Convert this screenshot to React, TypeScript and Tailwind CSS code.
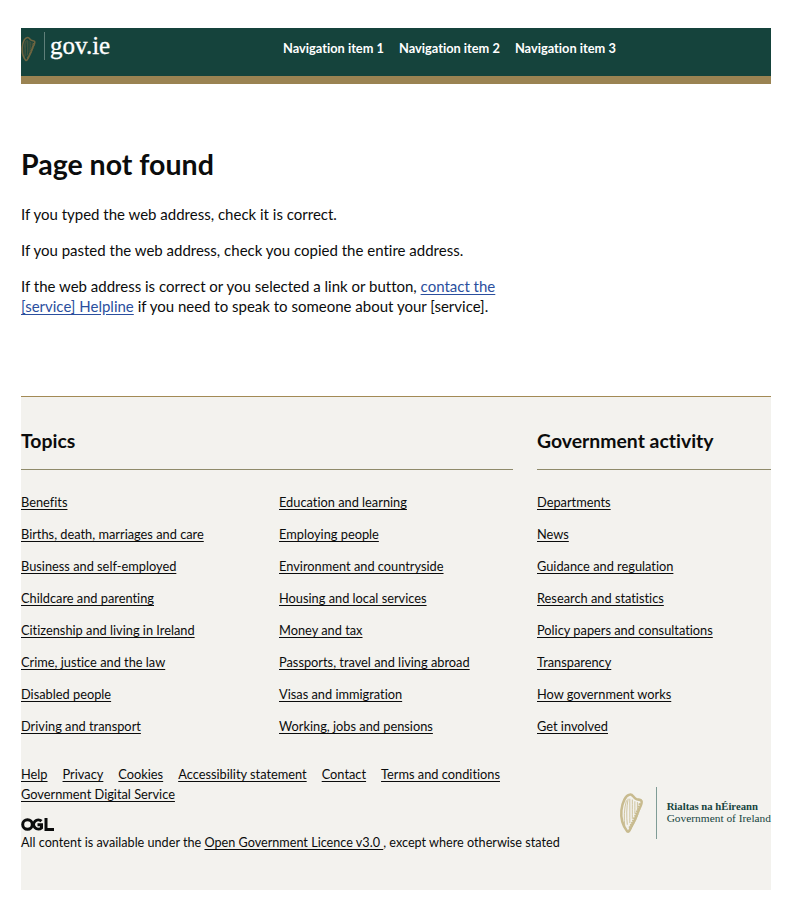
import React from "react";

const topicsLeft = [
  "Benefits",
  "Births, death, marriages and care",
  "Business and self-employed",
  "Childcare and parenting",
  "Citizenship and living in Ireland",
  "Crime, justice and the law",
  "Disabled people",
  "Driving and transport",
];
const topicsRight = [
  "Education and learning",
  "Employing people",
  "Environment and countryside",
  "Housing and local services",
  "Money and tax",
  "Passports, travel and living abroad",
  "Visas and immigration",
  "Working, jobs and pensions",
];
const govActivity = [
  "Departments",
  "News",
  "Guidance and regulation",
  "Research and statistics",
  "Policy papers and consultations",
  "Transparency",
  "How government works",
  "Get involved",
];
const metaLinks = ["Help", "Privacy", "Cookies", "Accessibility statement", "Contact", "Terms and conditions"];

const Harp = ({ className, color }: { className: string; color: string }) => (
  <svg viewBox="0 0 28 50" className={className} fill="none" stroke={color}>
    <path d="M9 47C4 41 1 32 2 22C3 12 7 4 12 3C15 2 16 6 19 8C22 10 25 8 26 11C27 14 24 18 22 23C20 29 17 36 14 41C12 45 11 48 9 47Z" strokeWidth="3" />
    <path d="M6 41C5 32 5 20 8 10M9 39C8 30 8 18 10 8M12 37C12 28 12 18 12 8M15 32C15 25 15 17 15 9M18 26C18 21 18 15 18 11M21 19V12" strokeWidth="1" />
    <path d="M12 43C17 35 21 25 25 13" strokeWidth="4" strokeDasharray="2 1" />
  </svg>
);

const ListColumn = ({ items }: { items: string[] }) => (
  <ul className="flex flex-col gap-3">
    {items.map((item) => (
      <li key={item} className="h-5 text-[12.8px] leading-5">
        <a href="#" className="underline underline-offset-[1.5px]">
          {item}
        </a>
      </li>
    ))}
  </ul>
);

export default function App() {
  return (
    <div className="min-h-[901px] bg-white pt-7 pr-5 pb-[11px] pl-[21px] font-['Lato',sans-serif] text-[#0b0c0c] [font-variant-ligatures:none]">
      <header className="flex h-14 items-start border-b-8 border-[#9a8352] bg-[#15433c]">
        <div className="flex h-12 w-[262px] items-start pt-1">
          <Harp className="mt-1 h-[26px] w-[15px] shrink-0" color="#6f6540" />
          <div className="mr-[5px] ml-2 h-7 w-px bg-[#5f7f79]" />
          <span className="font-['Liberation_Serif',serif] text-[25px] leading-7 font-normal text-white [-webkit-text-stroke:0.3px_white]">gov.ie</span>
        </div>
        <nav className="flex h-10 items-center gap-[15px] text-[12.8px] leading-5 font-bold text-white">
          <a href="#">Navigation item 1</a>
          <a href="#">Navigation item 2</a>
          <a href="#">Navigation item 3</a>
        </nav>
      </header>

      <main className="pt-[62px] pb-[80px]">
        <h1 className="text-[28.5px] leading-9 font-bold">Page not found</h1>
        <div className="mt-[22px] flex w-[492px] flex-col gap-4 text-[15px] leading-5">
          <p>If you typed the web address, check it is correct.</p>
          <p>If you pasted the web address, check you copied the entire address.</p>
          <p>
            If the web address is correct or you selected a link or button,{" "}
            <a href="#" className="text-[#2b4f9e] underline underline-offset-[1.5px]">
              contact the [service] Helpline
            </a>{" "}
            if you need to speak to someone about your [service].
          </p>
        </div>
      </main>

      <footer className="h-[494px] border-t border-[#a38a55] bg-[#f3f2ee]">
        <div className="grid grid-cols-3 gap-x-6 pt-[30px]">
          <section className="col-span-2">
            <h2 className="border-b border-[#8f8a6a] pb-[14px] text-[19.4px] leading-7 font-bold">Topics</h2>
            <div className="mt-[22px] grid grid-cols-2 gap-x-6">
              <ListColumn items={topicsLeft} />
              <ListColumn items={topicsRight} />
            </div>
          </section>
          <section>
            <h2 className="border-b border-[#8f8a6a] pb-[14px] text-[19.4px] leading-7 font-bold">Government activity</h2>
            <div className="mt-[22px]">
              <ListColumn items={govActivity} />
            </div>
          </section>
        </div>

        <div className="mt-[28px] flex items-start justify-between">
          <div className="text-[12.8px] leading-5">
            <div className="flex w-[500px] flex-wrap gap-x-[15px]">
              {metaLinks.map((link) => (
                <a key={link} href="#" className="underline underline-offset-[1.5px]">
                  {link}
                </a>
              ))}
              <a href="#" className="underline underline-offset-[1.5px]">
                Government Digital Service
              </a>
            </div>
            <svg viewBox="0 0 33 13" className="mt-[14px] block h-[13px] w-[33px]" fill="none" stroke="#0b0c0c" strokeWidth="3">
              <circle cx="6.5" cy="6.5" r="4.8" />
              <path d="M20.5 3.2A4.6 4.6 0 1 0 20.5 9.8V6.8H16.5" />
              <path d="M25 0V11.4H33" />
            </svg>
            <p className="mt-[2px] text-[12.65px] leading-5">
              All content is available under the{" "}
              <a href="#" className="underline underline-offset-[1.5px]">
                Open Government Licence v3.0{" "}
              </a>{" "}
              , except where otherwise stated
            </p>
          </div>
          <div className="mt-[23px] flex items-center">
            <Harp className="h-[42px] w-[27px]" color="#c8bb8f" />
            <div className="mr-[10px] ml-[11px] h-[52px] w-px bg-[#7f9c96]" />
            <div className="-mt-[3px] font-['Liberation_Serif',serif] text-[11.4px] leading-[12px] whitespace-nowrap text-[#17453f]">
              <div className="text-[10.7px] font-bold">Rialtas na hÉireann</div>
              <div>Government of Ireland</div>
            </div>
          </div>
        </div>
      </footer>
    </div>
  );
}
